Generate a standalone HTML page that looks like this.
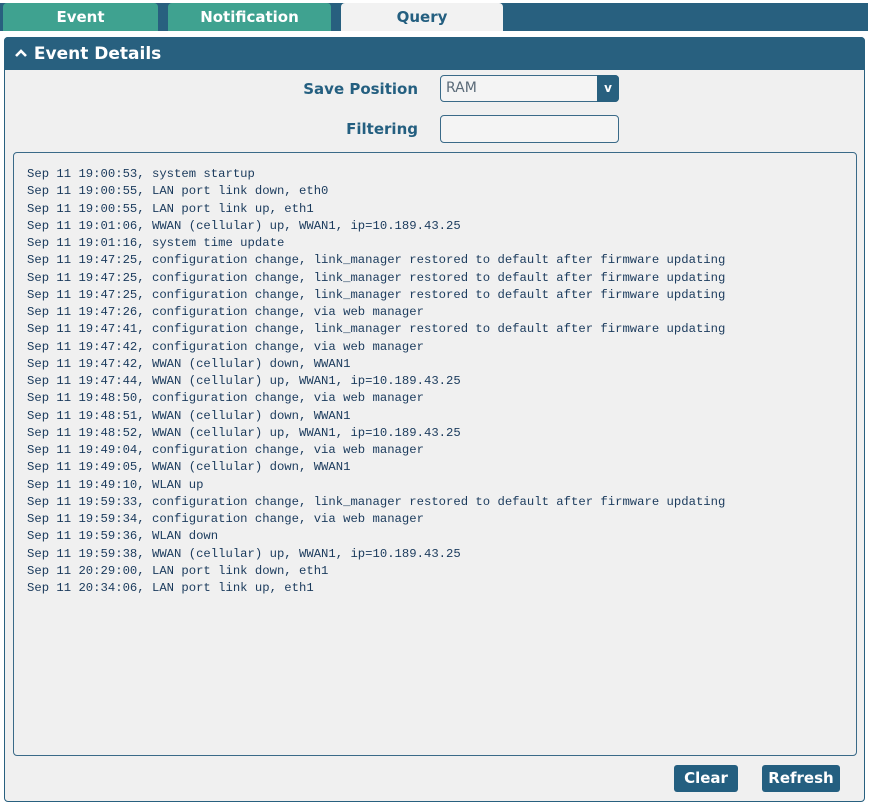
<!DOCTYPE html>
<html><head><meta charset="utf-8"><style>
body{margin:0;width:870px;height:806px;background:#fff;position:relative;font-family:"DejaVu Sans","Liberation Sans",sans-serif;overflow:hidden}
.a{position:absolute;box-sizing:border-box}
.tab{top:3px;height:28px;color:#fff;font-weight:bold;font-size:15px;text-align:center;line-height:28px;border-radius:4px 4px 0 0}
.log{font-family:"Liberation Mono",monospace;font-size:12.25px;line-height:17.25px;color:#1a3a5c;white-space:pre}
.btn{background:#245f80;color:#fff;font-weight:bold;font-size:15px;text-align:center;line-height:27px;border-radius:3px;top:765px;height:27px}
</style></head><body>
<div class="a" style="left:0;top:3px;width:868px;height:28px;background:#28607f"></div>
<div class="a tab" style="left:3px;width:155px;background:#3fa290">Event</div>
<div class="a tab" style="left:168px;width:163px;background:#3fa290">Notification</div>
<div class="a tab" style="left:341px;width:162px;background:#f2f2f2;color:#245f80;border-radius:4px 4px 0 0">Query</div>
<div class="a" style="left:4px;top:37px;width:861px;height:765px;border:1px solid #28607f;border-radius:4px;background:#f0f0f0"></div>
<div class="a" style="left:4px;top:37px;width:861px;height:33px;background:#28607f;border-radius:4px 4px 0 0;color:#fff;font-weight:bold;font-size:17px;line-height:34px;padding-left:10px">
<svg width="14" height="12" style="vertical-align:0px"><path d="M2 9 L7 4 L12 9" stroke="#fff" stroke-width="2.6" fill="none"/></svg> Event Details</div>
<div class="a" style="left:250px;top:78px;width:168px;text-align:right;font-weight:bold;font-size:15px;color:#245f80;line-height:22px">Save Position</div>
<div class="a" style="left:250px;top:118px;width:168px;text-align:right;font-weight:bold;font-size:15px;color:#245f80;line-height:22px">Filtering</div>
<div class="a" style="left:440px;top:75px;width:179px;height:27px;border:1px solid #3a6a88;border-radius:4px;background:#f4f4f4;color:#5a6a78;font-size:14px;line-height:25px;padding-left:5px">RAM</div>
<div class="a" style="left:597px;top:75px;width:22px;height:27px;background:#28607f;border-radius:0 4px 4px 0;color:#fff;font-size:12px;text-align:center;line-height:27px;font-weight:bold">v</div>
<div class="a" style="left:440px;top:115px;width:179px;height:28px;border:1px solid #3a6a88;border-radius:4px;background:#f4f4f4"></div>
<div class="a" style="left:13px;top:152px;width:844px;height:604px;border:1px solid #3a6a88;border-radius:4px;background:#f0f0f0"></div>
<div class="a log" style="left:27px;top:166px">Sep 11 19:00:53, system startup
Sep 11 19:00:55, LAN port link down, eth0
Sep 11 19:00:55, LAN port link up, eth1
Sep 11 19:01:06, WWAN (cellular) up, WWAN1, ip=10.189.43.25
Sep 11 19:01:16, system time update
Sep 11 19:47:25, configuration change, link_manager restored to default after firmware updating
Sep 11 19:47:25, configuration change, link_manager restored to default after firmware updating
Sep 11 19:47:25, configuration change, link_manager restored to default after firmware updating
Sep 11 19:47:26, configuration change, via web manager
Sep 11 19:47:41, configuration change, link_manager restored to default after firmware updating
Sep 11 19:47:42, configuration change, via web manager
Sep 11 19:47:42, WWAN (cellular) down, WWAN1
Sep 11 19:47:44, WWAN (cellular) up, WWAN1, ip=10.189.43.25
Sep 11 19:48:50, configuration change, via web manager
Sep 11 19:48:51, WWAN (cellular) down, WWAN1
Sep 11 19:48:52, WWAN (cellular) up, WWAN1, ip=10.189.43.25
Sep 11 19:49:04, configuration change, via web manager
Sep 11 19:49:05, WWAN (cellular) down, WWAN1
Sep 11 19:49:10, WLAN up
Sep 11 19:59:33, configuration change, link_manager restored to default after firmware updating
Sep 11 19:59:34, configuration change, via web manager
Sep 11 19:59:36, WLAN down
Sep 11 19:59:38, WWAN (cellular) up, WWAN1, ip=10.189.43.25
Sep 11 20:29:00, LAN port link down, eth1
Sep 11 20:34:06, LAN port link up, eth1</div>
<div class="a btn" style="left:674px;width:64px">Clear</div>
<div class="a btn" style="left:762px;width:78px">Refresh</div>
</body></html>
